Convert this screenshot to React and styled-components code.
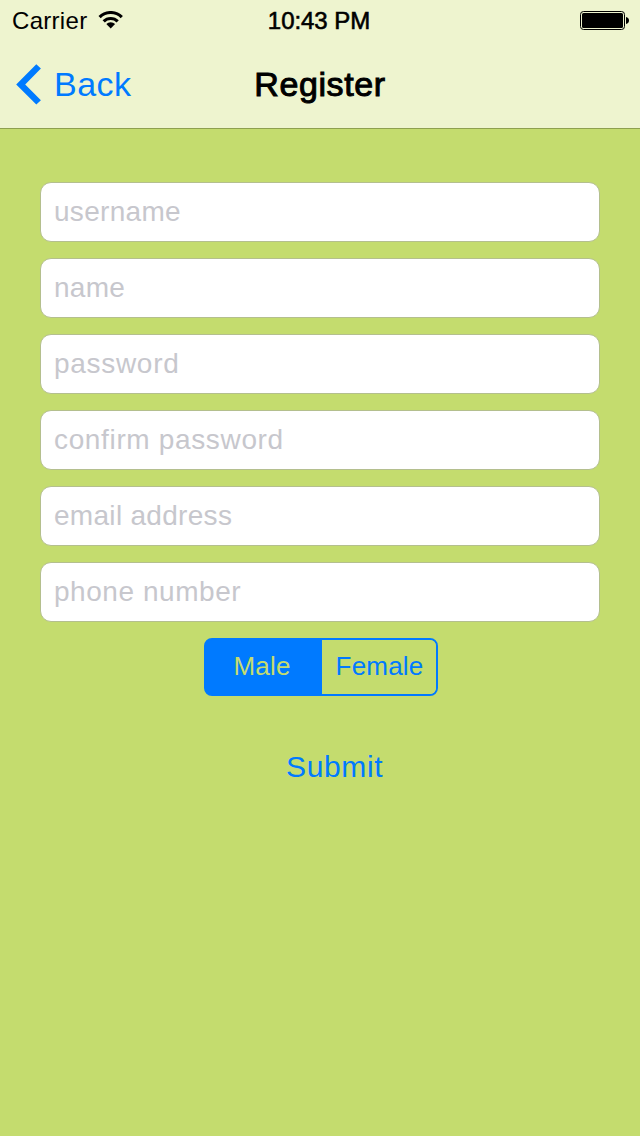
import React, { useState } from "react";
import styled, { createGlobalStyle } from "styled-components";

const GlobalStyle = createGlobalStyle`
  *, *::before, *::after { box-sizing: border-box; }
  body {
    margin: 0;
    background: #c4dc6e;
    font-family: "Liberation Sans", Arial, sans-serif;
    -webkit-font-smoothing: antialiased;
  }
`;

const Screen = styled.div`
  width: 640px;
  height: 1136px;
  display: flex;
  flex-direction: column;
  background: #c4dc6e;
  overflow: hidden;
`;

const Header = styled.header`
  height: 129px;
  background: #eef4cf;
  border-bottom: 1px solid #8ea04f;
`;

const StatusBar = styled.div`
  height: 40px;
  display: grid;
  grid-template-columns: 1fr auto 1fr;
  align-items: center;
  padding: 1px 11px 0 12px;
  font-size: 24px;
  line-height: 28px;
  color: #000;
`;

const Carrier = styled.div`
  display: flex;
  align-items: center;
  gap: 11px;
  letter-spacing: 0.3px;
`;

const Clock = styled.div`
  padding-right: 3px;
  letter-spacing: -0.05px;
  -webkit-text-stroke: 0.6px #000;
`;

const BatterySlot = styled.div`
  display: flex;
  justify-content: flex-end;
`;

const NavBar = styled.nav`
  height: 88px;
  display: grid;
  grid-template-columns: 1fr auto 1fr;
  align-items: center;
  padding: 0 16px;
  font-size: 34px;
  line-height: 40px;
`;

const BackButton = styled.button`
  display: flex;
  align-items: center;
  gap: 13px;
  padding: 0;
  border: 0;
  background: none;
  color: #007aff;
  font: inherit;
  letter-spacing: 0.5px;
`;

const Title = styled.h1`
  margin: 0;
  font-size: 34px;
  font-weight: 400;
  letter-spacing: 0.6px;
  -webkit-text-stroke: 1px #000;
`;

const Form = styled.form`
  display: flex;
  flex-direction: column;
  gap: 16px;
  padding: 53px 40px 0;
`;

const Field = styled.input`
  width: 100%;
  height: 60px;
  padding: 0 13px;
  border: 1px solid #b4bf8e;
  border-radius: 11px;
  background: #fff;
  color: #000;
  font: 28px "Liberation Sans", Arial, sans-serif;
  letter-spacing: ${(p) => p.$tracking}px;
  outline: none;
  &::placeholder { color: #c7c7cd; opacity: 1; }
`;

const Segments = styled.div`
  width: 234px;
  height: 58px;
  display: flex;
  margin-left: 164px;
  border: 2px solid #007aff;
  border-radius: 8px;
  background: linear-gradient(#007aff, #007aff) ${(p) => (p.$first ? "left" : "right")} / 50% 100% no-repeat;
  overflow: hidden;
`;

const Segment = styled.button`
  flex: 0 0 ${(p) => p.$width}px;
  padding: ${(p) => p.$inset};
  border: 0;
  background: ${(p) => (p.$active ? "#007aff" : "#c4dc6e")};
  color: ${(p) => (p.$active ? "#c4dc6e" : "#007aff")};
  font: 26px "Liberation Sans", Arial, sans-serif;
  letter-spacing: 0.2px;
`;

const Submit = styled.button`
  align-self: flex-start;
  margin: 37px 0 0 246px;
  padding: 0;
  border: 0;
  background: none;
  color: #007aff;
  font: 30px/36px "Liberation Sans", Arial, sans-serif;
  letter-spacing: 0.65px;
`;

const WifiIcon = () => (
  <svg width="26" height="20" viewBox="0 0 26 20">
    <g fill="none" stroke="#000" strokeWidth="3.1">
      <path d="M1.6 6.2A15.5 15.5 0 0 1 23.8 6.2" />
      <path d="M5.7 10.4A9.8 9.8 0 0 1 19.7 10.4" />
    </g>
    <path d="M8.3 13.1A6 6 0 0 1 17.1 13.1L12.7 17.6Z" fill="#000" />
  </svg>
);

const BatteryIcon = () => (
  <svg width="49" height="19" viewBox="0 0 49 19">
    <rect x="0.5" y="0.5" width="44" height="18" rx="3" fill="none" stroke="#000" />
    <rect x="2" y="2" width="41" height="15" rx="1.5" fill="#000" />
    <path d="M46 6C48 6.3 49 7.7 49 9.5S48 12.7 46 13Z" fill="#000" />
  </svg>
);

const Chevron = () => (
  <svg width="25" height="41" viewBox="0 0 25 41">
    <path d="M20.3 0.3L24.9 4.6L9.2 20.4L24.9 36.2L20.3 40.5L0.2 20.4Z" fill="#007aff" />
  </svg>
);

const fields = [
  { name: "username", label: "username", tracking: 0.3 },
  { name: "name", label: "name", tracking: 0.3 },
  { name: "password", label: "password", type: "password", tracking: 0.7 },
  { name: "confirm", label: "confirm password", type: "password", tracking: 0.65 },
  { name: "email", label: "email address", tracking: 0.3 },
  { name: "phone", label: "phone number", tracking: 0.55 },
];

export default function App() {
  const [gender, setGender] = useState("Male");
  return (
    <>
      <GlobalStyle />
      <Screen>
        <Header>
          <StatusBar>
            <Carrier>Carrier<WifiIcon /></Carrier>
            <Clock>10:43 PM</Clock>
            <BatterySlot><BatteryIcon /></BatterySlot>
          </StatusBar>
          <NavBar>
            <BackButton type="button"><Chevron />Back</BackButton>
            <Title>Register</Title>
          </NavBar>
        </Header>
        <Form onSubmit={(e) => e.preventDefault()}>
          {fields.map((f) => (
            <Field key={f.name} name={f.name} type={f.type || "text"} placeholder={f.label} $tracking={f.tracking} />
          ))}
          <Segments $first={gender === "Male"}>
            <Segment type="button" $width={116} $inset="0 4px 2px 0" $active={gender === "Male"} onClick={() => setGender("Male")}>Male</Segment>
            <Segment type="button" $width={114} $inset="0 0 2px 1px" $active={gender === "Female"} onClick={() => setGender("Female")}>Female</Segment>
          </Segments>
          <Submit type="submit">Submit</Submit>
        </Form>
      </Screen>
    </>
  );
}
